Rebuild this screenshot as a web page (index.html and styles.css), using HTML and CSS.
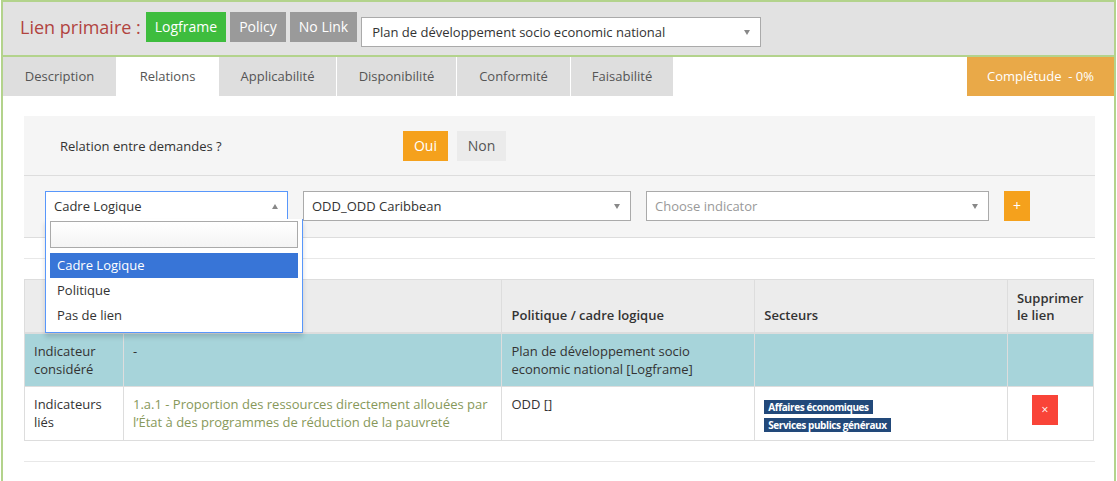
FILE: index.html
```html
<!DOCTYPE html>
<html lang="fr">
<head>
<meta charset="utf-8">
<title>Relations</title>
<link rel="stylesheet" href="styles.css">
</head>
<body>
<div class="page">
  <div class="header">
    <span class="lien-title">Lien primaire :</span>
    <div class="link-btns">
      <span class="lbtn lbtn-green">Logframe</span>
      <span class="lbtn lbtn-gray">Policy</span>
      <span class="lbtn lbtn-gray">No Link</span>
    </div>
    <div class="sel sel-header">
      <span class="sel-text">Plan de développement socio economic national</span>
      <span class="caret-down"></span>
    </div>
  </div>

  <div class="tabs">
    <span class="tab tab-desc">Description</span>
    <span class="tab tab-rel tab-active">Relations</span>
    <span class="tab tab-app">Applicabilité</span>
    <span class="tab tab-dispo">Disponibilité</span>
    <span class="tab tab-conf">Conformité</span>
    <span class="tab tab-fais">Faisabilité</span>
    <span class="tab-complete">Complétude&nbsp; - 0%</span>
  </div>

  <div class="content">
    <div class="panel">
      <div class="panel-row">
        <span class="panel-label">Relation entre demandes ?</span>
        <span class="yn yn-on">Oui</span>
        <span class="yn yn-off">Non</span>
      </div>
      <div class="select-row">
        <div class="sel-wrap">
          <div class="sel sel-open sel-w1">
            <span class="sel-text">Cadre Logique</span>
            <span class="caret-up"></span>
          </div>
          <div class="dropdown">
            <div class="dd-search"></div>
            <ul class="dd-list">
              <li class="dd-item dd-active">Cadre Logique</li>
              <li class="dd-item">Politique</li>
              <li class="dd-item">Pas de lien</li>
            </ul>
          </div>
        </div>
        <div class="sel sel-w2">
          <span class="sel-text">ODD_ODD Caribbean</span>
          <span class="caret-down"></span>
        </div>
        <div class="sel sel-w3">
          <span class="sel-text sel-placeholder">Choose indicator</span>
          <span class="caret-down"></span>
        </div>
        <span class="add-btn">+</span>
      </div>
    </div>

    <div class="sep sep-top"></div>

    <table class="rel-table">
      <colgroup>
        <col class="c1"><col class="c2"><col class="c3"><col class="c4"><col class="c5">
      </colgroup>
      <thead>
        <tr>
          <th></th>
          <th></th>
          <th>Politique / cadre logique</th>
          <th>Secteurs</th>
          <th>Supprimer le lien</th>
        </tr>
      </thead>
      <tbody>
        <tr class="row-considered">
          <td>Indicateur considéré</td>
          <td>-</td>
          <td>Plan de développement socio economic national [Logframe]</td>
          <td></td>
          <td></td>
        </tr>
        <tr>
          <td>Indicateurs liés</td>
          <td><span class="ind-link">1.a.1 - Proportion des ressources directement allouées par l’État à des programmes de réduction de la pauvreté</span></td>
          <td>ODD []</td>
          <td>
            <div class="badges">
              <span class="badge">Affaires économiques</span>
              <span class="badge">Services publics généraux</span>
            </div>
          </td>
          <td class="del-cell"><span class="del-btn">×</span></td>
        </tr>
      </tbody>
    </table>

    <div class="sep sep-bottom"></div>
  </div>
</div>
</body>
</html>
```

FILE: styles.css
```css
* { box-sizing: border-box; }
html, body { margin: 0; padding: 0; background: #fff; }
body {
  font-family: "Open Sans", "Liberation Sans", sans-serif;
  font-size: 13px;
  color: #333;
  width: 1117px;
  height: 481px;
  overflow: hidden;
}
.page {
  margin: 0 1px;
  border: 2px solid #b3d38c;
  border-bottom: none;
  min-height: 481px;
}

/* header */
.header {
  display: flex;
  align-items: flex-start;
  height: 55px;
  background: #e2e2e2;
  border-bottom: 2px solid #b3d38c;
  padding-left: 17px;
}
.lien-title {
  font-size: 18px;
  color: #b1443f;
  margin-top: 13px;
  margin-right: 5px;
  line-height: 24px;
}
.link-btns { display: flex; gap: 4px; margin-top: 10px; }
.lbtn {
  display: inline-block;
  height: 30px;
  line-height: 30px;
  padding: 0 9px;
  font-size: 14px;
  color: #fff;
}
.lbtn-green { background: #3ebd3e; }
.lbtn-gray { background: #9a9a9a; }

.sel {
  display: flex;
  align-items: center;
  justify-content: space-between;
  height: 30px;
  background: #fff;
  border: 1px solid #aaa;
  padding: 0 10px 0 8px;
  color: #333;
}
.sel-header { width: 400px; margin-top: 15px; margin-left: 4px; padding-left: 10px; }
.sel-text { white-space: nowrap; }
.sel-placeholder { color: #999; }
.caret-down {
  width: 0; height: 0;
  border-left: 3.5px solid transparent;
  border-right: 3.5px solid transparent;
  border-top: 5px solid #888;
}
.caret-up {
  width: 0; height: 0;
  border-left: 3.5px solid transparent;
  border-right: 3.5px solid transparent;
  border-bottom: 5px solid #888;
}

/* tabs */
.tabs {
  display: flex;
  height: 39px;
  color: #555;
}
.tab {
  line-height: 39px;
  text-align: center;
  background: #dedede;
  border-right: 1px solid #fff;
}
.tab-desc { width: 114px; }
.tab-rel { width: 102px; }
.tab-app { width: 118px; }
.tab-dispo { width: 120px; }
.tab-conf { width: 114px; }
.tab-fais { width: 102px; border-right: none; }
.tab-active { background: #fff; }
.tab-complete {
  margin-left: auto;
  width: 147px;
  line-height: 39px;
  text-align: center;
  background: #e9a948;
  color: #fff;
}

/* content */
.content { padding: 20px 19px 0 21px; }
.panel {
  background: #f5f5f5;
  border-bottom: 1px solid #ddd;
}
.panel-row {
  display: flex;
  align-items: center;
  height: 60px;
  padding-left: 36px;
  border-bottom: 1px solid #ddd;
}
.panel-label { width: 343px; }
.yn {
  height: 30px;
  line-height: 30px;
  font-size: 14px;
  margin-right: 9px;
  text-align: center;
}
.yn-on { background: #f5a11c; color: #fff; width: 45px; }
.yn-off { background: #ebebeb; color: #555; width: 49px; }

.select-row {
  display: flex;
  align-items: flex-start;
  gap: 15px;
  height: 61px;
  padding: 15px 0 0 21px;
}
.sel-wrap { position: relative; }
.sel-open { border-color: #5897fb; padding-right: 9px; }
.sel-w1 { width: 243px; }
.sel-w2 { width: 328px; }
.sel-w3 { width: 343px; }
.add-btn {
  width: 26px;
  height: 30px;
  line-height: 30px;
  text-align: center;
  background: #f5a11c;
  color: #fff;
  font-size: 14px;
}

.dropdown {
  position: absolute;
  top: 28px;
  left: 0;
  width: 258px;
  background: #fff;
  border: 1px solid #5897fb;
  border-top: none;
  box-shadow: 0 4px 5px rgba(0, 0, 0, 0.15);
  padding: 2px 4px 4px 4px;
  z-index: 10;
}
.dd-search {
  height: 27px;
  border: 1px solid #aaa;
  background: linear-gradient(#fff, #f4f4f4);
}
.dd-list { list-style: none; margin: 5px 0 0 0; padding: 0; }
.dd-item {
  height: 25px;
  line-height: 25px;
  padding-left: 7px;
  color: #333;
}
.dd-active { background: #3875d7; color: #fff; }

.sep { border-top: 1px solid #e8e8e8; }
.sep-top { margin-top: 20px; }
.sep-bottom { margin-top: 20px; }

/* table */
.rel-table {
  width: 1070px;
  margin-top: 20px;
  border-collapse: collapse;
  border: 1px solid #ddd;
}
.c1 { width: 99px; }
.c2 { width: 379px; }
.c3 { width: 253px; }
.c4 { width: 253px; }
.c5 { width: 86px; }
.rel-table th, .rel-table td {
  border: 1px solid #ddd;
  padding: 8px 9px;
  line-height: 18px;
  text-align: left;
}
.rel-table th {
  background: #ececec;
  font-weight: 600;
  line-height: 17px;
  vertical-align: bottom;
  height: 53px;
  border-bottom: 2px solid #ddd;
}
.rel-table td { vertical-align: top; height: 54px; }
.row-considered td { background: #a7d4da; }
.ind-link { color: #87985a; }
.badges { display: flex; flex-direction: column; align-items: flex-start; gap: 4px; margin-top: 5px; }
.badge {
  background: #22497a;
  color: #fff;
  font-size: 10px;
  font-weight: 700;
  line-height: 14px;
  padding: 0 4px;
  letter-spacing: -0.4px;
}
.del-cell { padding-left: 24px !important; }
.del-btn {
  display: block;
  width: 26px;
  height: 30px;
  line-height: 30px;
  text-align: center;
  background: #f94438;
  color: #fff;
  font-size: 12px;
}
```
